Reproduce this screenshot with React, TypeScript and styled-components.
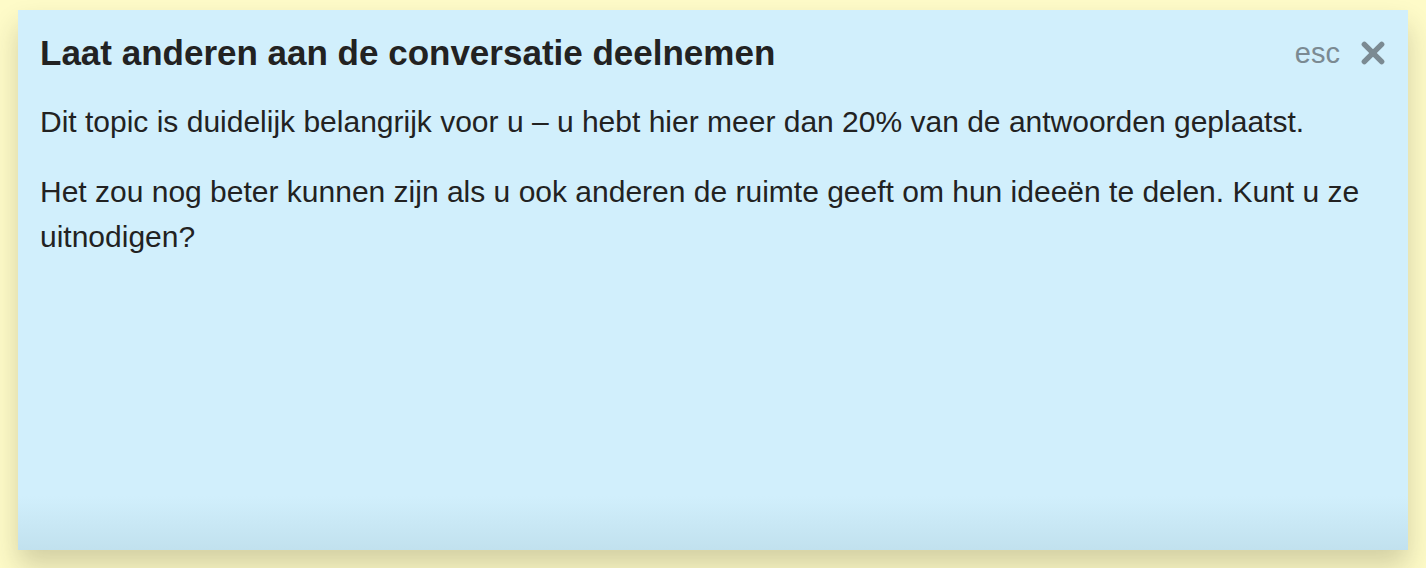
import styled, { createGlobalStyle } from 'styled-components';

const GlobalStyle = createGlobalStyle`
    html, body {
        margin: 0;
        padding: 0;
        height: 100%;
    }

    body {
        background: #fefbc8;
        font-family: 'Liberation Sans', Arial, Helvetica, sans-serif;
        color: #222222;
    }
`;

const Page = styled.div`
    height: 568px;
    padding: 10px 18px 18px 18px;
    box-sizing: border-box;
`;

const Popup = styled.div`
    height: 540px;
    box-sizing: border-box;
    padding: 22px 22px 0 22px;
    background: linear-gradient(
        to bottom,
        #d1effc 0%,
        #d1effc 90%,
        #c1e1ee 100%
    );
    box-shadow: 0 16px 26px rgba(40, 40, 20, 0.2);
`;

const Header = styled.div`
    display: flex;
    align-items: center;
    justify-content: space-between;
`;

const Title = styled.h3`
    margin: 0;
    font-size: 35px;
    font-weight: bold;
    line-height: 42px;
`;

const CloseArea = styled.div`
    display: flex;
    align-items: center;
    gap: 20px;
    color: #7b8a92;
`;

const EscLabel = styled.span`
    font-size: 29px;
`;

const CloseIcon = styled.svg`
    width: 26px;
    height: 26px;
    display: block;
`;

const Paragraph = styled.p`
    margin: 25px 0 0 0;
    font-size: 30px;
    line-height: 45px;
`;

const App = () => {
    return (
        <>
            <GlobalStyle />
            <Page>
                <Popup>
                    <Header>
                        <Title>Laat anderen aan de conversatie deelnemen</Title>
                        <CloseArea>
                            <EscLabel>esc</EscLabel>
                            <CloseIcon viewBox='0 0 24 24'>
                                <path
                                    d='M4 4 L20 20 M20 4 L4 20'
                                    stroke='currentColor'
                                    strokeWidth='5'
                                    strokeLinecap='round'
                                />
                            </CloseIcon>
                        </CloseArea>
                    </Header>
                    <Paragraph>
                        Dit topic is duidelijk belangrijk voor u – u hebt hier meer dan 20% van de antwoorden
                        geplaatst.
                    </Paragraph>
                    <Paragraph>
                        Het zou nog beter kunnen zijn als u ook anderen de ruimte geeft om hun ideeën te delen.
                        Kunt u ze uitnodigen?
                    </Paragraph>
                </Popup>
            </Page>
        </>
    );
};

export default App;
